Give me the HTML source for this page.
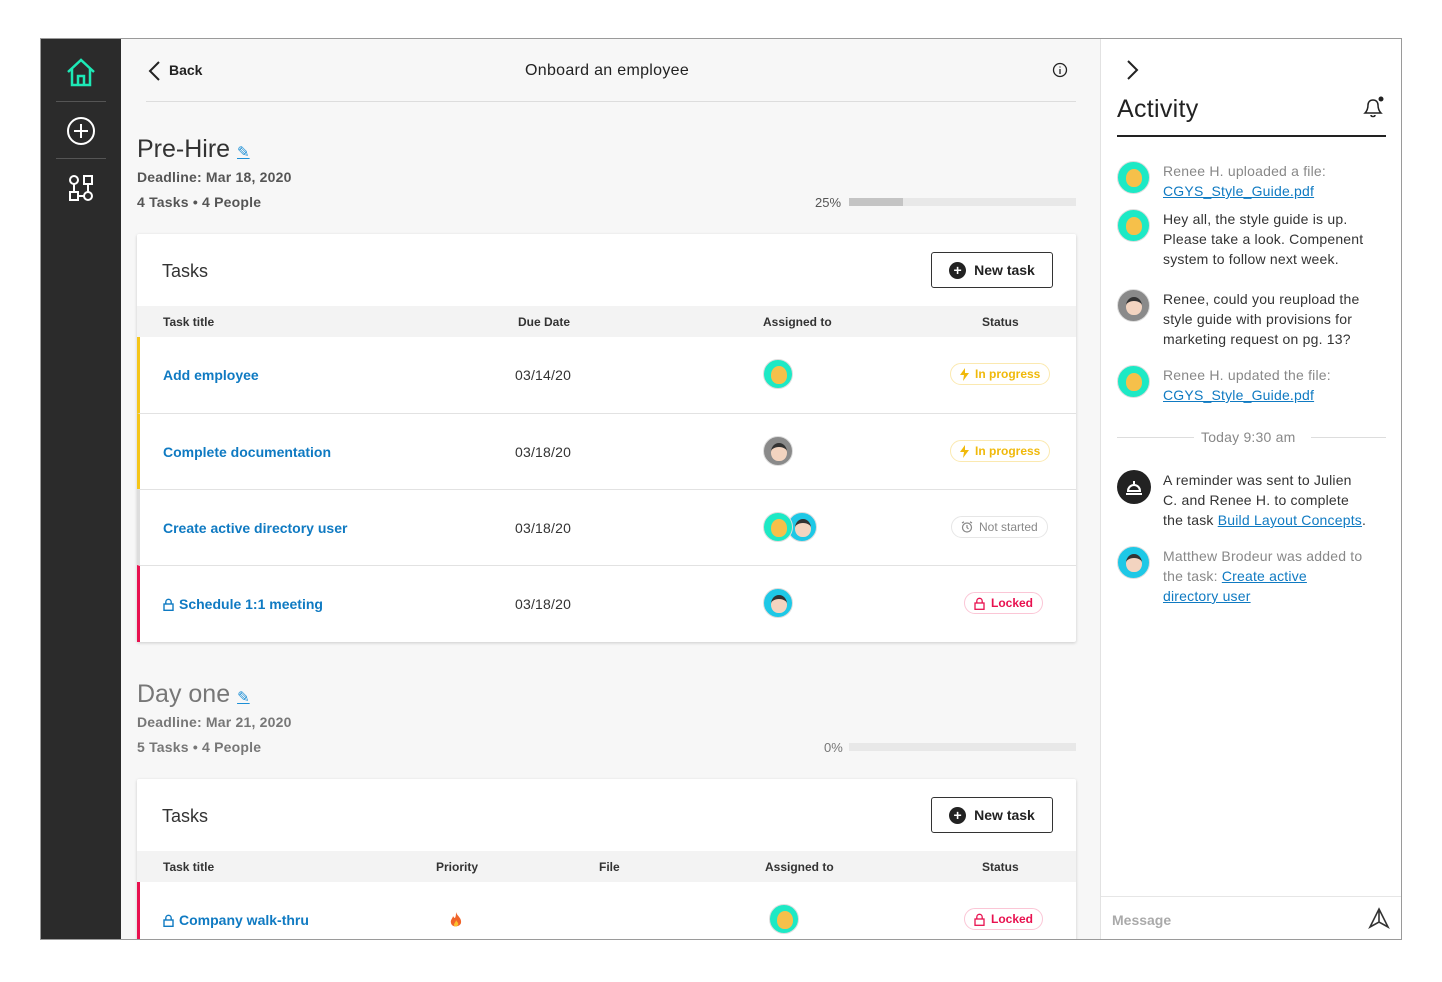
<!DOCTYPE html>
<html><head><meta charset="utf-8"><style>
*{box-sizing:border-box;margin:0;padding:0}
body{width:1442px;height:982px;background:#fff;font-family:"Liberation Sans",sans-serif;position:relative;overflow:hidden;color:#222}
.a{position:absolute}
.frame{left:40px;top:38px;width:1362px;height:902px;border:1px solid #9a9a9a;overflow:hidden;background:#f7f7f7}
.side{left:0;top:0;width:80px;height:902px;background:#2b2b2b}
.main{left:80px;top:0;width:979px;height:902px;overflow:hidden}
.right{left:1059px;top:0;width:302px;height:902px;background:#fff;border-left:1px solid #e2e2e2}
.card{background:#fff;box-shadow:0 1px 3px rgba(0,0,0,.18);border-radius:2px}
.th{background:#f3f3f3;font-size:12px;font-weight:bold;color:#333}
.row{border-top:1px solid #e2e2e2;height:76px}
.lk{color:#0f7ac2;font-weight:bold;font-size:14px;display:flex;align-items:center;gap:5px;white-space:nowrap}
.av{width:30px;height:30px;border-radius:50%;border:1px solid #ddd;overflow:hidden}
.face{position:absolute;left:7px;top:6px;width:16px;height:18px;border-radius:50% 50% 45% 45%;background:#f6c04a}
.pill{height:22px;border-radius:11px;font-size:12px;font-weight:bold;display:flex;align-items:center;gap:6px;padding:0 9px;white-space:nowrap}
.btn{width:122px;height:36px;border:1.5px solid #333;border-radius:3px;background:#fff;display:flex;align-items:center;justify-content:center;gap:8px;font-weight:bold;font-size:14px}
.plus{width:17px;height:17px;border-radius:50%;background:#222;color:#fff;font-size:14px;line-height:17px;text-align:center}
.ft{font-size:14px;line-height:20px;color:#333;letter-spacing:.2px;white-space:nowrap}
.gr{color:#888}
.ul{color:#0f7ac2;text-decoration:underline}
</style></head><body>
<div class="a frame">
 <div class="a side">
  <svg class="a" style="left:24px;top:19px" width="32" height="30" viewBox="0 0 32 30" fill="none" stroke="#1de9b6" stroke-width="2.5"><path d="M3 14 L16 2 L29 14 M7 11 V27 H25 V11 M13 27 V18 H19 V27"/></svg>
  <div class="a" style="left:15px;top:62px;width:50px;height:1px;background:#555"></div>
  <svg class="a" style="left:25px;top:77px" width="30" height="30" viewBox="0 0 30 30" fill="none" stroke="#fff" stroke-width="2"><circle cx="15" cy="15" r="13"/><path d="M15 8V22M8 15H22"/></svg>
  <div class="a" style="left:15px;top:119px;width:50px;height:1px;background:#555"></div>
  <svg class="a" style="left:27px;top:136px" width="26" height="26" viewBox="0 0 26 26" fill="none" stroke="#fff" stroke-width="2"><circle cx="6" cy="5" r="4"/><rect x="16" y="1" width="8" height="8"/><rect x="2" y="17" width="8" height="8"/><circle cx="20" cy="21" r="4"/><path d="M6 9V17M20 9V17M10 21H16"/></svg>
 </div>
 <div class="a main">
  <svg class="a" style="left:26px;top:21px" width="14" height="22" viewBox="0 0 14 22" fill="none" stroke="#222" stroke-width="2"><path d="M12 2L3 11L12 20"/></svg>
  <div class="a" style="left:48px;top:23px;font-size:14px;font-weight:bold">Back</div>
  <div class="a" style="left:404px;top:23px;font-size:16px;color:#222;letter-spacing:.3px">Onboard an employee</div>
  <svg class="a" style="left:931px;top:23px" width="16" height="16" viewBox="0 0 16 16" fill="none" stroke="#222" stroke-width="1.3"><circle cx="8" cy="8" r="6.5"/><path d="M8 7V12M8 4.5V5.5"/></svg>
  <div class="a" style="left:25px;top:62px;width:930px;height:1px;background:#ddd"></div>

  <div class="a" style="left:16px;top:96px;font-size:25px;color:#333">Pre-Hire <span style="font-size:15px;color:#1b8fd6;text-decoration:underline">✎</span></div>
  <div class="a" style="left:16px;top:130px;font-size:14px;font-weight:bold;color:#555;letter-spacing:.2px">Deadline: Mar 18, 2020</div>
  <div class="a" style="left:16px;top:155px;font-size:14px;font-weight:bold;color:#555;letter-spacing:.2px">4 Tasks • 4 People</div>
  <div class="a" style="left:694px;top:156px;font-size:13px;color:#555">25%</div>
  <div class="a" style="left:728px;top:159px;width:227px;height:8px;background:#e8e8e8"><div style="width:54px;height:8px;background:#c4c4c4"></div></div>

  <div class="a card" style="left:16px;top:195px;width:939px;height:408px">
   <div class="a" style="left:25px;top:27px;font-size:18px;color:#333">Tasks</div>
   <div class="a btn" style="left:794px;top:18px"><span class="plus">+</span>New task</div>
   <div class="a th" style="left:0;top:72px;width:939px;height:31px">
    <span class="a" style="left:26px;top:9px">Task title</span><span class="a" style="left:381px;top:9px">Due Date</span><span class="a" style="left:626px;top:9px">Assigned to</span><span class="a" style="left:845px;top:9px">Status</span>
   </div>
   <div class="a row" style="left:0;top:103px;width:939px;border-top:none;border-left:3px solid #f5c518">
    <span class="a lk" style="left:23px;top:30px">Add employee</span><span class="a ft" style="left:375px;top:28px">03/14/20</span>
    <div class="a av" style="left:623px;top:22px;background:#1de9c5"><div class="face"></div></div>
    <div class="a pill" style="left:810px;top:26px;border:1.5px solid #fbe9b0;color:#f0b90b"><svg width="9" height="13" viewBox="0 0 9 13"><path d="M5 0L0 7H4L3 13L9 5H5Z" fill="#f0b90b"/></svg>In progress</div>
   </div>
   <div class="a row" style="left:0;top:179px;width:939px;border-left:3px solid #f5c518">
    <span class="a lk" style="left:23px;top:30px">Complete documentation</span><span class="a ft" style="left:375px;top:28px">03/18/20</span>
    <div class="a av" style="left:623px;top:22px;background:#8a8a8a"><div class="face" style="background:#f3d4c0;border-top:4px solid #333"></div></div>
    <div class="a pill" style="left:810px;top:26px;border:1.5px solid #fbe9b0;color:#f0b90b"><svg width="9" height="13" viewBox="0 0 9 13"><path d="M5 0L0 7H4L3 13L9 5H5Z" fill="#f0b90b"/></svg>In progress</div>
   </div>
   <div class="a row" style="left:0;top:255px;width:939px;border-left:3px solid #ddd">
    <span class="a lk" style="left:23px;top:30px">Create active directory user</span><span class="a ft" style="left:375px;top:28px">03/18/20</span>
    <div class="a av" style="left:647px;top:22px;background:#1ec8e6"><div class="face" style="background:#f3d4c0;border-top:4px solid #333"></div></div>
    <div class="a av" style="left:623px;top:22px;background:#1de9c5"><div class="face"></div></div>
    <div class="a pill" style="left:811px;top:26px;border:1.5px solid #e6e6e6;color:#888;font-weight:normal"><svg width="12" height="12" viewBox="0 0 12 12" fill="none" stroke="#888" stroke-width="1.2"><circle cx="6" cy="6.5" r="4.5"/><path d="M6 4V6.5L7.5 8M1 2L3 0.8M11 2L9 0.8"/></svg>Not started</div>
   </div>
   <div class="a row" style="left:0;top:331px;width:939px;height:77px;border-left:3px solid #e8114f">
    <span class="a lk" style="left:23px;top:30px"><svg width="11" height="13" viewBox="0 0 11 13" fill="none" stroke="#0f7ac2" stroke-width="1.4"><rect x="1" y="6" width="9" height="6.3"/><path d="M2.8 6V4A2.7 2.7 0 0 1 8.2 4V6"/></svg>Schedule 1:1 meeting</span><span class="a ft" style="left:375px;top:28px">03/18/20</span>
    <div class="a av" style="left:623px;top:22px;background:#1ec8e6"><div class="face" style="background:#f3d4c0;border-top:4px solid #333"></div></div>
    <div class="a pill" style="left:824px;top:26px;border:1.5px solid #fbc6d6;color:#e8114f"><svg width="11" height="13" viewBox="0 0 11 13" fill="none" stroke="#e8114f" stroke-width="1.3"><rect x="1" y="6" width="9" height="6.3"/><path d="M2.8 6V4A2.7 2.7 0 0 1 8.2 4V6"/></svg>Locked</div>
   </div>
  </div>

  <div class="a" style="left:16px;top:641px;font-size:25px;color:#777">Day one <span style="font-size:15px;color:#1b8fd6;text-decoration:underline">✎</span></div>
  <div class="a" style="left:16px;top:675px;font-size:14px;font-weight:bold;color:#777;letter-spacing:.2px">Deadline: Mar 21, 2020</div>
  <div class="a" style="left:16px;top:700px;font-size:14px;font-weight:bold;color:#777;letter-spacing:.2px">5 Tasks • 4 People</div>
  <div class="a" style="left:703px;top:701px;font-size:13px;color:#777">0%</div>
  <div class="a" style="left:728px;top:704px;width:227px;height:8px;background:#e8e8e8"></div>

  <div class="a card" style="left:16px;top:740px;width:939px;height:200px">
   <div class="a" style="left:25px;top:27px;font-size:18px;color:#333">Tasks</div>
   <div class="a btn" style="left:794px;top:18px"><span class="plus">+</span>New task</div>
   <div class="a th" style="left:0;top:72px;width:939px;height:31px">
    <span class="a" style="left:26px;top:9px">Task title</span><span class="a" style="left:299px;top:9px">Priority</span><span class="a" style="left:462px;top:9px">File</span><span class="a" style="left:628px;top:9px">Assigned to</span><span class="a" style="left:845px;top:9px">Status</span>
   </div>
   <div class="a row" style="left:0;top:103px;width:939px;border-top:none;border-left:3px solid #e8114f">
    <span class="a lk" style="left:23px;top:30px"><svg width="11" height="13" viewBox="0 0 11 13" fill="none" stroke="#0f7ac2" stroke-width="1.4"><rect x="1" y="6" width="9" height="6.3"/><path d="M2.8 6V4A2.7 2.7 0 0 1 8.2 4V6"/></svg>Company walk-thru</span>
    <svg class="a" style="left:310px;top:30px" width="12" height="16" viewBox="0 0 12 16"><path d="M6 0C7 4 12 6 11 11C10 15 2 16 1 11C0 8 3 6 3 4C4 6 5 6 5 6C6 4 6 2 6 0Z" fill="#f0642a"/><path d="M6 8C7 10 9 11 8 13C7 15 4 15 4 13C4 11 6 10 6 8Z" fill="#fbc02d"/></svg>
    <div class="a av" style="left:629px;top:22px;background:#1de9c5"><div class="face"></div></div>
    <div class="a pill" style="left:824px;top:26px;border:1.5px solid #fbc6d6;color:#e8114f"><svg width="11" height="13" viewBox="0 0 11 13" fill="none" stroke="#e8114f" stroke-width="1.3"><rect x="1" y="6" width="9" height="6.3"/><path d="M2.8 6V4A2.7 2.7 0 0 1 8.2 4V6"/></svg>Locked</div>
   </div>
  </div>
 </div>

 <div class="a right">
  <svg class="a" style="left:25px;top:20px" width="14" height="22" viewBox="0 0 14 22" fill="none" stroke="#222" stroke-width="2"><path d="M2 2L11 11L2 20"/></svg>
  <div class="a" style="left:16px;top:56px;font-size:25px;color:#222;letter-spacing:.3px">Activity</div>
  <svg class="a" style="left:260px;top:55px" width="26" height="26" viewBox="0 0 26 26" fill="none" stroke="#222" stroke-width="1.5"><path d="M4 19H20C18 17 17 15 17 11C17 8 15 6 12 6C9 6 7 8 7 11C7 15 6 17 4 19ZM10 21C10 23 14 23 14 21"/><circle cx="20" cy="5" r="2.5" fill="#222" stroke="none"/></svg>
  <div class="a" style="left:16px;top:96px;width:269px;height:2px;background:#222"></div>

  <div class="a av" style="left:16px;top:122px;width:33px;height:33px;background:#1de9c5"><div class="face" style="left:8px;top:7px"></div></div>
  <div class="a ft gr" style="left:62px;top:122px">Renee H. uploaded a file:<br><span class="ul">CGYS_Style_Guide.pdf</span></div>
  <div class="a av" style="left:16px;top:170px;width:33px;height:33px;background:#1de9c5"><div class="face" style="left:8px;top:7px"></div></div>
  <div class="a ft" style="left:62px;top:170px">Hey all, the style guide is up.<br>Please take a look. Compenent<br>system to follow next week.</div>
  <div class="a av" style="left:16px;top:250px;width:33px;height:33px;background:#8a8a8a"><div class="face" style="left:8px;top:7px;background:#f3d4c0;border-top:4px solid #333"></div></div>
  <div class="a ft" style="left:62px;top:250px">Renee, could you reupload the<br>style guide with provisions for<br>marketing request on pg. 13?</div>
  <div class="a av" style="left:16px;top:326px;width:33px;height:33px;background:#1de9c5"><div class="face" style="left:8px;top:7px"></div></div>
  <div class="a ft gr" style="left:62px;top:326px">Renee H. updated the file:<br><span class="ul">CGYS_Style_Guide.pdf</span></div>

  <div class="a" style="left:16px;top:398px;width:77px;height:1px;background:#ddd"></div>
  <div class="a" style="left:100px;top:390px;font-size:14px;color:#888;letter-spacing:.2px">Today 9:30 am</div>
  <div class="a" style="left:210px;top:398px;width:75px;height:1px;background:#ddd"></div>

  <div class="a" style="left:16px;top:431px;width:34px;height:34px;border-radius:50%;background:#222"><svg width="34" height="34" viewBox="0 0 34 34" fill="none" stroke="#fff" stroke-width="2"><path d="M11 21A6 6 0 0 1 23 21Z"/><path d="M9 24H25M17 11V14"/></svg></div>
  <div class="a ft" style="left:62px;top:431px">A reminder was sent to Julien<br>C. and Renee H. to complete<br>the task <span class="ul">Build Layout Concepts</span>.</div>
  <div class="a av" style="left:16px;top:507px;width:33px;height:33px;background:#1ec8e6"><div class="face" style="left:8px;top:7px;background:#f3d4c0;border-top:4px solid #333"></div></div>
  <div class="a ft gr" style="left:62px;top:507px">Matthew Brodeur was added to<br>the task: <span class="ul">Create active<br>directory user</span></div>

  <div class="a" style="left:0;top:857px;width:302px;height:1px;background:#e6e6e6"></div>
  <div class="a" style="left:11px;top:873px;font-size:14px;font-weight:bold;color:#aaa">Message</div>
  <svg class="a" style="left:267px;top:868px" width="22" height="22" viewBox="0 0 22 22" fill="none" stroke="#333" stroke-width="1.6"><path d="M11 2L20 20L11 15L2 20Z M11 2V15"/></svg>
 </div>
</div>
</body></html>
